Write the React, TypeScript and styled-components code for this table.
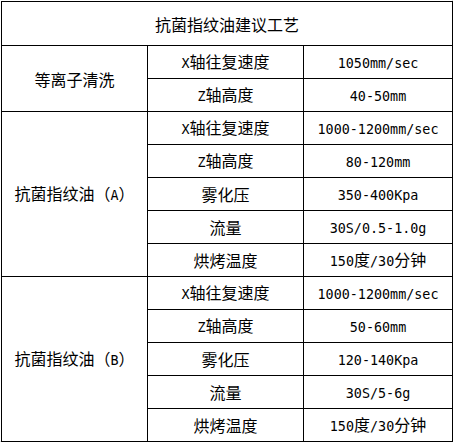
import React from 'react';
import styled, { createGlobalStyle } from 'styled-components';

const GlobalStyle = createGlobalStyle`
  html, body {
    margin: 0;
    padding: 0;
    background: #ffffff;
  }
  body {
    font-family: "Noto Sans CJK SC", "DejaVu Sans", sans-serif;
    color: #000000;
  }
`;

const Sheet = styled.div`
  width: 453px;
  height: 442px;
  padding: 1px 0 0 1px;
  box-sizing: border-box;
  border-right: 1px solid #d9d9d9;
  border-bottom: 1px solid #d9d9d9;
  background: #ffffff;
`;

const Table = styled.table`
  border-collapse: collapse;
  table-layout: fixed;
  width: 452px;
`;

const Cell = styled.td<{ $title?: boolean }>`
  border: 1px solid #000000;
  height: ${p => (p.$title ? 43 : 32)}px;
  padding: 0;
  text-align: center;
  vertical-align: middle;
  font-size: 16px;
  line-height: 18px;
  font-weight: 400;
  white-space: nowrap;
  letter-spacing: 0;
`;

const Latin = styled.span`
  font-family: "DejaVu Sans Mono", "Liberation Mono", monospace;
  font-size: 13.4px;
`;

type Row = { label: string; value: string };

type Group = { name: string; rows: Row[] };

const groups: Group[] = [
  {
    name: '等离子清洗',
    rows: [
      { label: 'X轴往复速度', value: '1050mm/sec' },
      { label: 'Z轴高度', value: '40-50mm' },
    ],
  },
  {
    name: '抗菌指纹油（A）',
    rows: [
      { label: 'X轴往复速度', value: '1000-1200mm/sec' },
      { label: 'Z轴高度', value: '80-120mm' },
      { label: '雾化压', value: '350-400Kpa' },
      { label: '流量', value: '30S/0.5-1.0g' },
      { label: '烘烤温度', value: '150度/30分钟' },
    ],
  },
  {
    name: '抗菌指纹油（B）',
    rows: [
      { label: 'X轴往复速度', value: '1000-1200mm/sec' },
      { label: 'Z轴高度', value: '50-60mm' },
      { label: '雾化压', value: '120-140Kpa' },
      { label: '流量', value: '30S/5-6g' },
      { label: '烘烤温度', value: '150度/30分钟' },
    ],
  },
];

// half-width runs use the narrow mono face, like the sheet's SimSun
const mixed = (text: string) =>
  text.split(/([\x21-\x7e]+)/).map((part, i) =>
    /^[\x21-\x7e]+$/.test(part) ? <Latin key={i}>{part}</Latin> : part
  );

const App = () => {
  return (
    <>
      <GlobalStyle />
      <Sheet>
        <Table>
          <colgroup>
            <col style={{ width: 146 }} />
            <col style={{ width: 156 }} />
            <col style={{ width: 149 }} />
          </colgroup>
          <tbody>
            <tr>
              <Cell $title colSpan={3}>抗菌指纹油建议工艺</Cell>
            </tr>
            {groups.map(g =>
              g.rows.map((r, i) => (
                <tr key={g.name + i}>
                  {i === 0 && <Cell rowSpan={g.rows.length}>{mixed(g.name)}</Cell>}
                  <Cell>{mixed(r.label)}</Cell>
                  <Cell>{mixed(r.value)}</Cell>
                </tr>
              ))
            )}
          </tbody>
        </Table>
      </Sheet>
    </>
  );
};

export default App;
